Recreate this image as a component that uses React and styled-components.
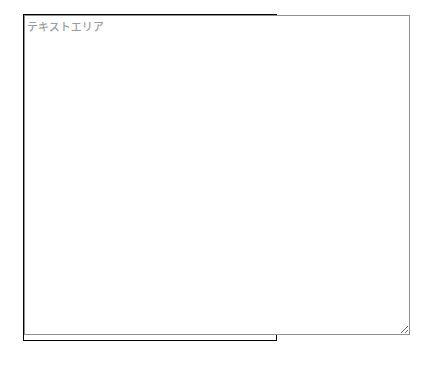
import React from "react";
import styled, { createGlobalStyle } from "styled-components";

const GlobalStyle = createGlobalStyle`
  html, body {
    margin: 0;
    padding: 0;
    background: #ffffff;
  }
  body {
    font-family: "Noto Sans CJK JP", "Liberation Sans", sans-serif;
  }
`;

const Page = styled.div`
  padding: 14px 0 0 23px;
`;

const Frame = styled.div`
  width: 252px;
  border: 1px solid #000000;
  padding-bottom: 5px;
`;

const TextArea = styled.textarea`
  display: block;
  box-sizing: border-box;
  width: 386px;
  height: 320px;
  margin: 0;
  padding: 2px;
  border: 1px solid #8f8f8f;
  font-family: "Noto Sans CJK JP", "Liberation Sans", sans-serif;
  font-size: 11px;
  font-weight: 500;
  line-height: 17px;
  color: #000;
  background: #fff;
  outline: none;

  &::placeholder {
    color: #9a9ea3;
  }
`;

export default function App() {
  return (
    <>
      <GlobalStyle />
      <Page>
        <Frame>
          <TextArea placeholder="テキストエリア" />
        </Frame>
      </Page>
    </>
  );
}
